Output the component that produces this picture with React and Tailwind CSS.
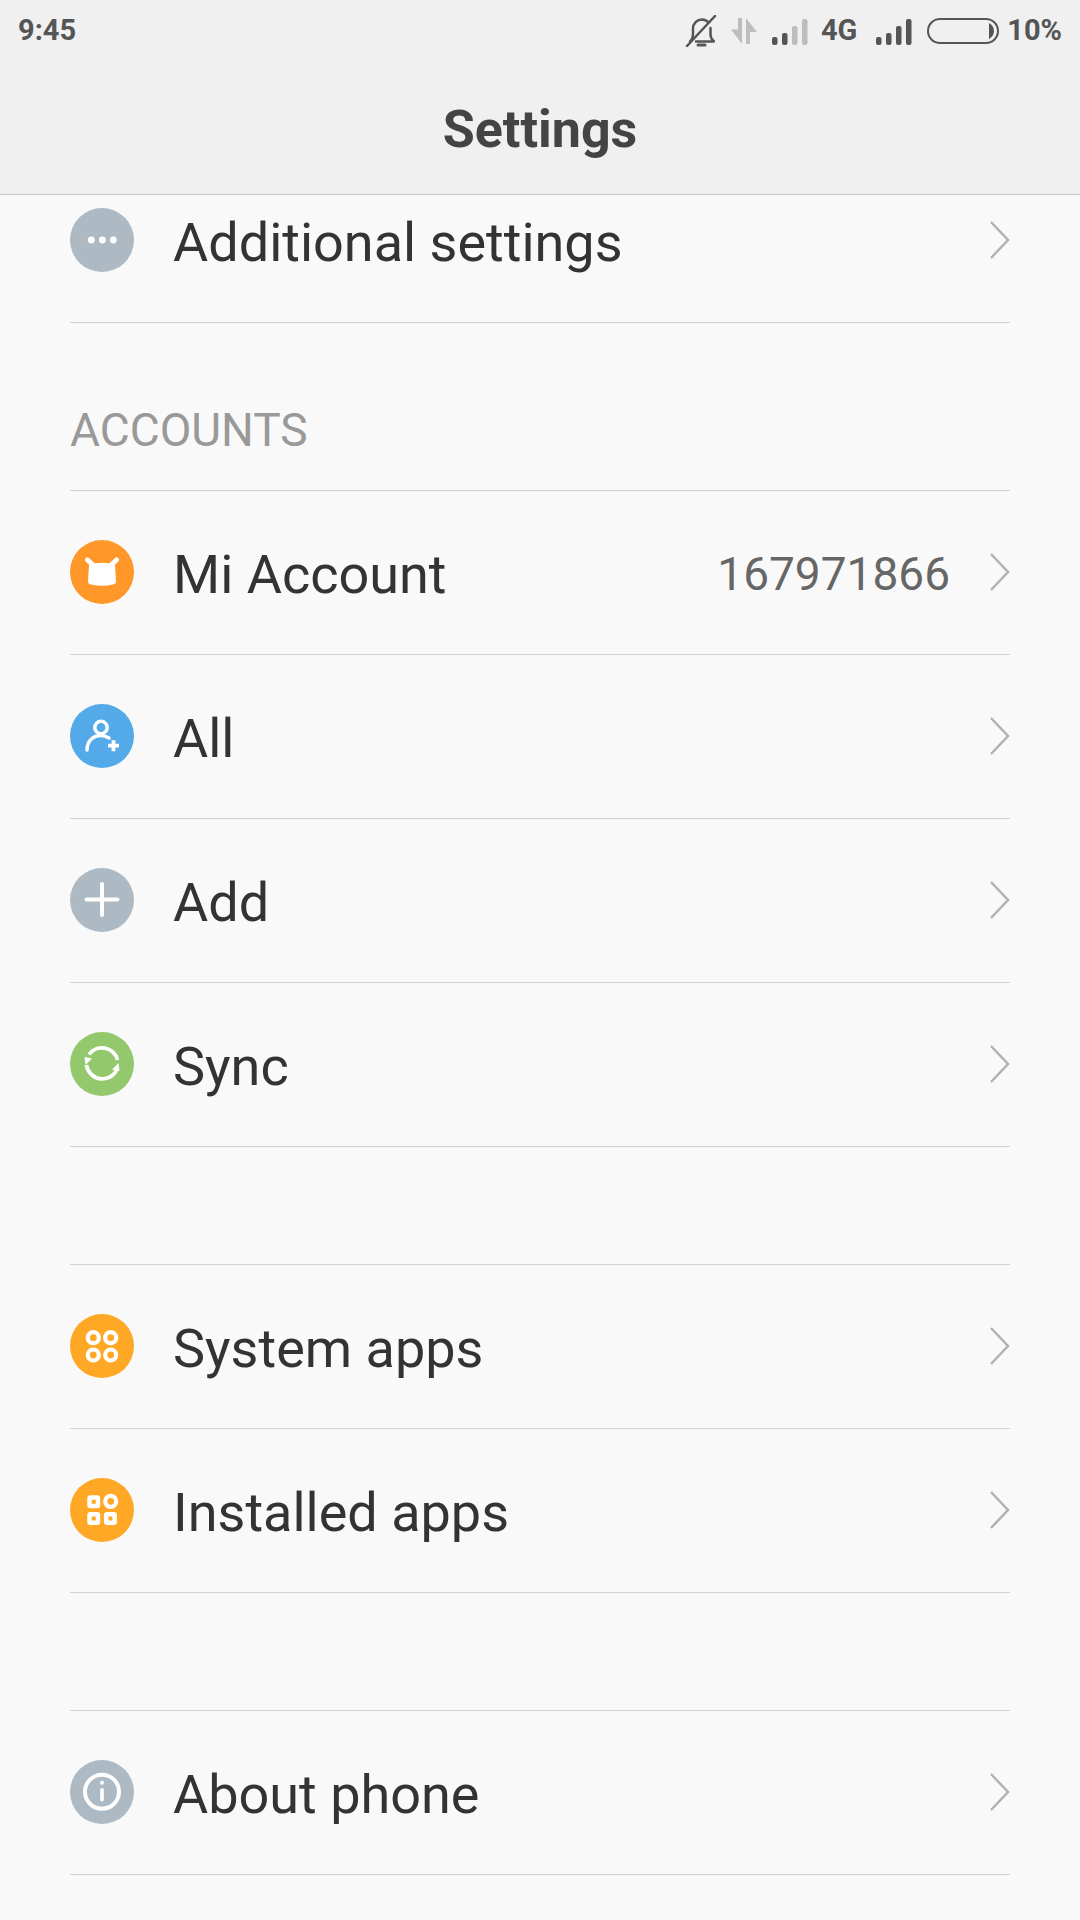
import React from 'react';

const Bell = () => (
  <svg width="32" height="32" viewBox="0 0 32 32" fill="none" stroke="#555" strokeWidth="2.500" strokeLinecap="round">
    <path d="M5 26.500c2-1.500 3-3.500 3-8v-5c0-5 4-9 9-9 3 0 5 1 6.500 3" />
    <path d="M25.500 13v5.500c0 4 1 6.500 4 8H11" />
    <path d="M2 31L30 1" />
    <path d="M13 30h7" strokeWidth="3" />
  </svg>
);

const DataArrows = () => (
  <svg width="28" height="28" viewBox="0 0 28 28" fill="#bdbdbd">
    <path d="M8 1h4v26L1 12.500h7z" />
    <path d="M16 1l11 14h-7v12h-4z" />
  </svg>
);

const Signal = ({ active }) => {
  const bars = [
    { x: 0, h: 8 },
    { x: 10, h: 12 },
    { x: 20, h: 19 },
    { x: 30, h: 26 },
  ];
  return (
    <svg width="38" height="27" viewBox="0 0 38 27">
      {bars.map((b, i) => (
        <rect key={b.x} x={b.x} y={27 - b.h} width="5.500" height={b.h} rx="2" fill={i < active ? '#555' : '#bdbdbd'} />
      ))}
    </svg>
  );
};

const Battery = () => (
  <svg width="72" height="26" viewBox="0 0 72 26" fill="none">
    <rect x="1" y="1" width="70" height="24" rx="12" stroke="#555" strokeWidth="2" />
    <path d="M62 5c3 1.500 5 4.500 5 8s-2 6.500-5 8z" fill="#555" />
  </svg>
);

const StatusBar = () => (
  <div className="h-[60px] pt-[2px] flex items-center justify-between pl-[18px] pr-[18px] font-['Roboto',sans-serif] font-bold text-[29px] text-[#555]">
    <span>9:45</span>
    <div className="flex items-center">
      <Bell />
      <div className="ml-[13px]"><DataArrows /></div>
      <div className="ml-[14px]"><Signal active={2} /></div>
      <span className="ml-[11px]">4G</span>
      <div className="ml-[19px]"><Signal active={4} /></div>
      <div className="ml-[13px]"><Battery /></div>
      <span className="ml-[8px]">10%</span>
    </div>
  </div>
);

const Chevron = () => (
  <svg width="20" height="38" viewBox="0 0 20 38" fill="none" stroke="#b2b2b2" strokeWidth="2.500">
    <path d="M1 1l17 18L1 37" />
  </svg>
);

const Disc = ({ color, children }) => (
  <svg width="64" height="64" viewBox="0 0 64 64" className="shrink-0">
    <circle cx="32" cy="32" r="32" fill={color} />
    {children}
  </svg>
);

const MoreIcon = () => (
  <Disc color="#adbac4">
    <g fill="#fff">
      <circle cx="21.300" cy="32" r="3.400" />
      <circle cx="32.300" cy="32" r="3.400" />
      <circle cx="43.300" cy="32" r="3.400" />
    </g>
  </Disc>
);

const MiIcon = () => (
  <Disc color="#ff9828">
    <path d="M17.500 20l5 4.500M46.500 20l-5 4.500" stroke="#fff" strokeWidth="5" strokeLinecap="round" />
    <path d="M19 25Q32 20.500 45 25L46 41Q46 44 43 44.500Q32 47 21 44.500Q18 44 18 41Z" fill="#fff" />
  </Disc>
);

const AccountsIcon = () => (
  <Disc color="#54a9e8">
    <g fill="none" stroke="#fff" strokeWidth="3.500" strokeLinecap="round">
      <circle cx="31" cy="23.500" r="6.200" />
      <path d="M17 46C17 37 23 31.500 31 31.500C34 31.500 36.500 32.500 39 34" />
      <path d="M38 41.700h11M43.500 36.200v11" strokeWidth="3.800" strokeLinecap="butt" />
    </g>
  </Disc>
);

const AddIcon = () => (
  <Disc color="#adbac4">
    <path d="M16.500 31.500h31M32 16v31" stroke="#fff" strokeWidth="4" strokeLinecap="round" />
  </Disc>
);

const SyncIcon = () => (
  <Disc color="#93c86c">
    <g fill="none" stroke="#fff" strokeWidth="3.800">
      <path d="M19 22.500A16 16 0 0 1 47.500 28" />
      <path d="M47.500 36A16 16 0 0 1 16.500 33" />
    </g>
    <path d="M14.500 25L22 26.500L15.500 33ZM49.500 39L42 37.500L48.500 31Z" fill="#fff" />
  </Disc>
);

const SystemAppsIcon = () => (
  <Disc color="#ffa826">
    <g fill="none" stroke="#fff" strokeWidth="4.200">
      <circle cx="23.300" cy="23.700" r="5.500" />
      <circle cx="40.700" cy="23.700" r="5.500" />
      <circle cx="23.300" cy="41" r="5.500" />
      <circle cx="40.700" cy="41" r="5.500" />
    </g>
  </Disc>
);

const InstalledAppsIcon = () => (
  <Disc color="#ffa826">
    <g fill="none" stroke="#fff" strokeWidth="4.500">
      <rect x="19.500" y="19.500" width="8.500" height="8.500" rx="1" />
      <circle cx="40.700" cy="23.300" r="5.500" strokeWidth="4.200" />
      <rect x="19.500" y="36.200" width="8.500" height="8.500" rx="1" />
      <rect x="36.200" y="36.200" width="8.500" height="8.500" rx="1" />
    </g>
  </Disc>
);

const InfoIcon = () => (
  <Disc color="#adbac4">
    <circle cx="32" cy="31.700" r="17" fill="none" stroke="#fff" strokeWidth="4" />
    <circle cx="32" cy="22.700" r="2" fill="#fff" />
    <rect x="30.200" y="28" width="3.600" height="13.500" rx="1.800" fill="#fff" />
  </Disc>
);

const Row = ({ icon, label, value }) => (
  <div className="h-[164px] pb-[1px] flex items-center border-b border-[#d2d2d2]">
    {icon}
    <span className="ml-[39px] pt-[4px] text-[54px] text-[#333] flex-1">{label}</span>
    {value && <span className="pt-[4px] text-[46px] text-[#666] mr-[40px]">{value}</span>}
    <Chevron />
  </div>
);

export default function App() {
  return (
    <div className="w-[1080px] h-[1920px] overflow-hidden flex flex-col bg-[#f9f9f9] font-['Roboto',sans-serif]">
      <header className="h-[195px] shrink-0 bg-[#f0f0f0] border-b border-[#c4c4c4]">
        <StatusBar />
        <h1 className="text-center mt-[41px] font-bold text-[52px] leading-[58px] text-[#444]">Settings</h1>
      </header>

      <main className="flex-1 overflow-hidden px-[70px]">
        <div className="-mt-[36px]">
          <Row icon={<MoreIcon />} label="Additional settings" />
          <div className="h-[168px] flex items-center border-b border-[#d2d2d2] text-[46px] text-[#999] pt-[48px]">ACCOUNTS</div>
          <Row icon={<MiIcon />} label="Mi Account" value="167971866" />
          <Row icon={<AccountsIcon />} label="All" />
          <Row icon={<AddIcon />} label="Add" />
          <Row icon={<SyncIcon />} label="Sync" />

          <div className="h-[118px] border-b border-[#d2d2d2]" />
          <Row icon={<SystemAppsIcon />} label="System apps" />
          <Row icon={<InstalledAppsIcon />} label="Installed apps" />

          <div className="h-[118px] border-b border-[#d2d2d2]" />
          <Row icon={<InfoIcon />} label="About phone" />
        </div>
      </main>
    </div>
  );
}
